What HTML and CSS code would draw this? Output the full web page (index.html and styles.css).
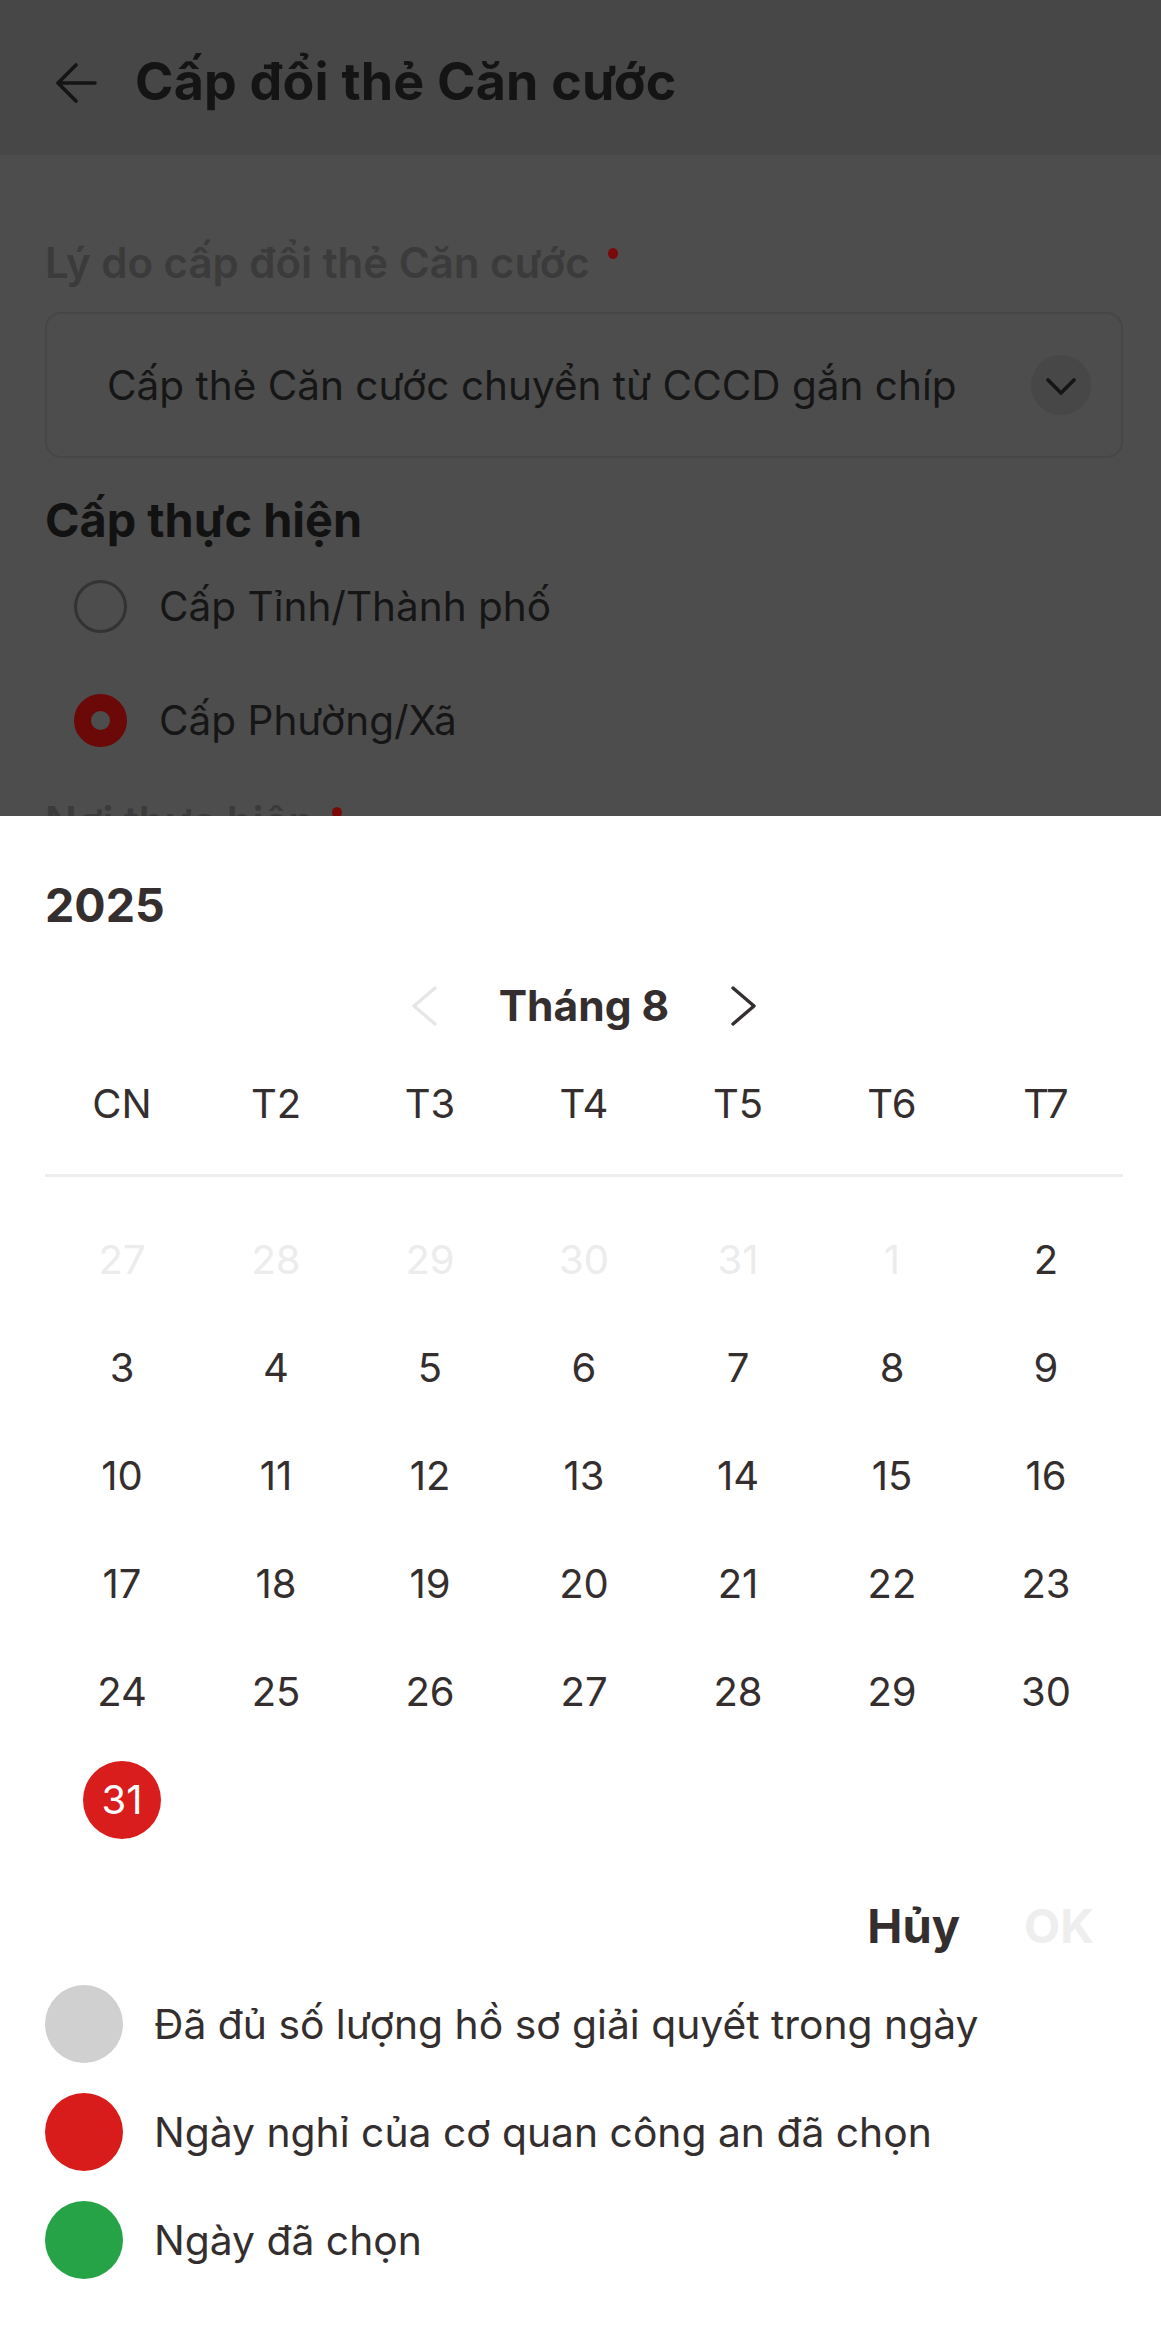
FILE: index.html
```html
<!DOCTYPE html>
<html lang="vi">
<head>
<meta charset="utf-8">
<title>Cấp đổi thẻ Căn cước</title>
<link rel="stylesheet" href="styles.css">
</head>
<body>
<div class="screen">
  <header class="topbar">
    <svg class="back" width="42" height="40" viewBox="0 0 42 40" aria-hidden="true"><path d="M40 20H3M21 2L3 20l18 18" fill="none" stroke="#141414" stroke-width="3.6" stroke-linecap="round" stroke-linejoin="round"/></svg>
    <h1 class="title">Cấp đổi thẻ Căn cước</h1>
  </header>
  <main class="content">
    <div class="field-label">Lý do cấp đổi thẻ Căn cước<span class="req"></span></div>
    <div class="select">
      <span class="select-text">Cấp thẻ Căn cước chuyển từ CCCD gắn chíp</span>
      <span class="select-btn"><svg width="30" height="18" viewBox="0 0 30 18" aria-hidden="true"><path d="M2 2l13 13L28 2" fill="none" stroke="#151515" stroke-width="3.6" stroke-linecap="round" stroke-linejoin="round"/></svg></span>
    </div>
    <h2 class="section-title">Cấp thực hiện</h2>
    <div class="radios">
      <div class="radio-row"><span class="radio"></span><span class="radio-text">Cấp Tỉnh/Thành phố</span></div>
      <div class="radio-row"><span class="radio checked"></span><span class="radio-text">Cấp Phường/Xã</span></div>
    </div>
    <div class="field-label next">Nơi thực hiện<span class="req"></span></div>
  </main>

  <section class="sheet">
    <div class="year">2025</div>
    <div class="month-nav">
      <svg class="chev" width="30" height="42" viewBox="0 0 30 42" aria-hidden="true"><path d="M26 3L5 21l21 18" fill="none" stroke="#e6e6e6" stroke-width="3.4" stroke-linecap="round" stroke-linejoin="round"/></svg>
      <span class="month">Tháng 8</span>
      <svg class="chev" width="30" height="42" viewBox="0 0 30 42" aria-hidden="true"><path d="M4 3l21 18L4 39" fill="none" stroke="#342e2e" stroke-width="3.4" stroke-linecap="round" stroke-linejoin="round"/></svg>
    </div>
    <div class="weekdays">
      <span>CN</span><span>T2</span><span>T3</span><span>T4</span><span>T5</span><span>T6</span><span>T7</span>
    </div>
    <div class="divider"></div>
    <div class="days">
      <span class="muted">27</span><span class="muted">28</span><span class="muted">29</span><span class="muted">30</span><span class="muted">31</span><span class="muted">1</span><span>2</span>
      <span>3</span><span>4</span><span>5</span><span>6</span><span>7</span><span>8</span><span>9</span>
      <span>10</span><span>11</span><span>12</span><span>13</span><span>14</span><span>15</span><span>16</span>
      <span>17</span><span>18</span><span>19</span><span>20</span><span>21</span><span>22</span><span>23</span>
      <span>24</span><span>25</span><span>26</span><span>27</span><span>28</span><span>29</span><span>30</span>
      <span><b class="holiday">31</b></span>
    </div>
    <div class="actions">
      <span class="btn">Hủy</span>
      <span class="btn disabled">OK</span>
    </div>
    <ul class="legend">
      <li><span class="dot gray"></span>Đã đủ số lượng hồ sơ giải quyết trong ngày</li>
      <li><span class="dot red"></span>Ngày nghỉ của cơ quan công an đã chọn</li>
      <li><span class="dot green"></span>Ngày đã chọn</li>
    </ul>
  </section>
</div>
</body>
</html>
```

FILE: styles.css
```css
* { box-sizing: border-box; }
html, body { margin: 0; padding: 0; }
body {
  font-family: "Inter", "Liberation Sans", sans-serif;
  background: #4d4d4d;
  width: 1161px;
  height: 2333px;
  overflow: hidden;
}
.screen {
  position: relative;
  width: 1161px;
  height: 2333px;
  background: #4d4d4d;
}
.topbar {
  height: 155px;
  background: #474747;
  display: flex;
  align-items: center;
  padding: 10px 0 0 55px;
  gap: 38px;
}
.back { flex: none; }
.title {
  margin: 0;
  font-size: 52px;
  font-weight: 700;
  color: #141414;
  line-height: 1.2;
  letter-spacing: 0.2px;
}
.content {
  padding: 0 38px 0 45px;
}
.field-label {
  margin-top: 83px;
  font-size: 42px;
  line-height: 50px;
  font-weight: 600;
  color: #3b3b3b;
  display: flex;
  align-items: flex-start;
}
.field-label.next { margin-top: 35px; }
.req {
  width: 10px;
  height: 11px;
  border-radius: 50%;
  background: #7a0a0a;
  margin: 10px 0 0 18px;
}
.select {
  margin-top: 24px;
  height: 146px;
  border: 2px solid #464646;
  border-radius: 16px;
  display: flex;
  align-items: center;
  justify-content: space-between;
  padding: 0 30px 0 60px;
}
.select-text {
  font-size: 40.5px;
  color: #161616;
}
.select-btn {
  width: 60px;
  height: 60px;
  border-radius: 50%;
  background: #474747;
  display: flex;
  align-items: center;
  justify-content: center;
  padding-top: 3px;
}
.section-title {
  margin: 34px 0 0;
  font-size: 46.8px;
  line-height: 56px;
  font-weight: 700;
  color: #121212;
}
.radios {
  margin-top: 16px;
  display: flex;
  flex-direction: column;
  gap: 30px;
}
.radio-row {
  height: 84px;
  display: flex;
  align-items: center;
  padding-left: 29px;
  gap: 32px;
}
.radio {
  width: 53px;
  height: 53px;
  border-radius: 50%;
  border: 3px solid #333;
  flex: none;
}
.radio.checked {
  border: 17px solid #6b0808;
  background: #4d4d4d;
}
.radio-text {
  font-size: 40.5px;
  color: #161616;
}

/* bottom sheet */
.sheet {
  position: absolute;
  left: 0;
  right: 0;
  top: 816px;
  bottom: 0;
  background: #fff;
  padding: 61px 38px 0 45px;
  color: #342e2e;
}
.year {
  font-size: 46.5px;
  line-height: 56px;
  font-weight: 700;
}
.month-nav {
  margin-top: 43px;
  height: 60px;
  display: flex;
  align-items: center;
  justify-content: center;
  gap: 60px;
}
.month {
  font-size: 42.5px;
  font-weight: 700;
  line-height: 60px;
}
.weekdays, .days {
  display: grid;
  grid-template-columns: repeat(7, 1fr);
  text-align: center;
  font-size: 40px;
}
.weekdays {
  margin-top: 44px;
  line-height: 48px;
}
.divider {
  margin-top: 46px;
  height: 3px;
  background: #eeeeee;
}
.days {
  margin-top: 29px;
  grid-auto-rows: 108px;
  align-items: center;
}
.days span { line-height: 48px; display: flex; justify-content: center; }
.days .muted { color: #ececec; }
.holiday {
  width: 78px;
  height: 78px;
  border-radius: 50%;
  background: #d91c1c;
  color: #fff;
  font-weight: 400;
  display: flex;
  align-items: center;
  justify-content: center;
}
.actions {
  margin-top: 44px;
  display: flex;
  justify-content: flex-end;
  gap: 64px;
  padding-right: 29px;
}
.btn {
  font-size: 47px;
  line-height: 56px;
  font-weight: 700;
  color: #342e2e;
}
.btn.disabled { color: #eeeeee; }
.legend {
  list-style: none;
  margin: 31px 0 0;
  padding: 0;
  display: flex;
  flex-direction: column;
  gap: 30px;
}
.legend li {
  display: flex;
  align-items: center;
  gap: 31px;
  font-size: 40.8px;
  height: 78px;
}
.dot {
  width: 78px;
  height: 78px;
  border-radius: 50%;
  flex: none;
}
.dot.gray { background: #d0d0d0; }
.dot.red { background: #d81b1b; }
.dot.green { background: #26a346; }
```
